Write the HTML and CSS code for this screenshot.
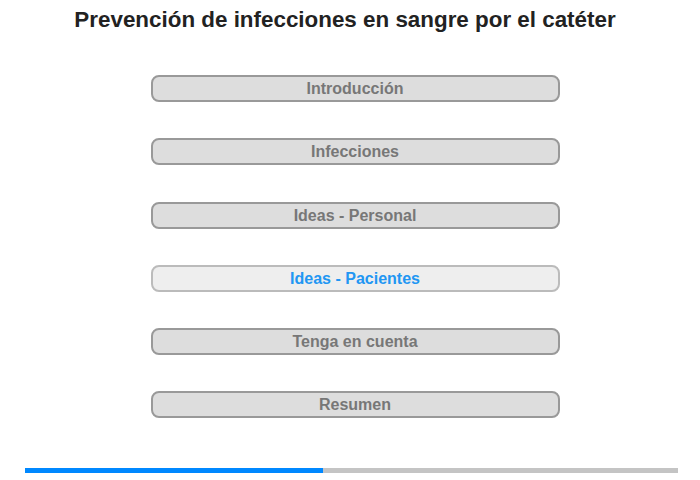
FILE: index.html
```html
<!DOCTYPE html>
<html lang="es">
<head>
<meta charset="utf-8">
<link rel="stylesheet" href="styles.css">
</head>
<body>
<div class="page">
  <h1 class="title">Prevención de infecciones en sangre por el catéter</h1>
  <nav class="menu">
    <div class="item">Introducción</div>
    <div class="item">Infecciones</div>
    <div class="item">Ideas - Personal</div>
    <div class="item active">Ideas - Pacientes</div>
    <div class="item">Tenga en cuenta</div>
    <div class="item">Resumen</div>
  </nav>
  <div class="progress"><div class="fill" style="width:45.6%"></div></div>
</div>
</body>
</html>
```
FILE: styles.css
```css
html, body { margin: 0; padding: 0; background: #fff; }
.page {
  width: 700px; height: 480px;
  display: flex; flex-direction: column; align-items: center;
  font-family: "Liberation Sans", Arial, sans-serif;
}
.title {
  margin: 7px 10px 0 0; font-size: 22.4px; line-height: 26px; font-weight: bold;
  color: #222; text-align: center;
}
.menu {
  margin: 42px 0 0 10px;
  display: flex; flex-direction: column; gap: 36.3px;
  width: 409px;
}
.item {
  box-sizing: border-box; height: 27px;
  border: 2px solid #999; border-radius: 8px; background: #ddd;
  color: #777; font-weight: bold; font-size: 16px; line-height: 23px;
  text-align: center;
}
.item.active { background: #eee; border-color: #bbb; color: #2196f3; }
.progress {
  margin: auto 0 7px 3px;
  width: 653px; height: 5px; background: #c4c4c4;
}
.fill { height: 100%; background: #0088ff; }
```
